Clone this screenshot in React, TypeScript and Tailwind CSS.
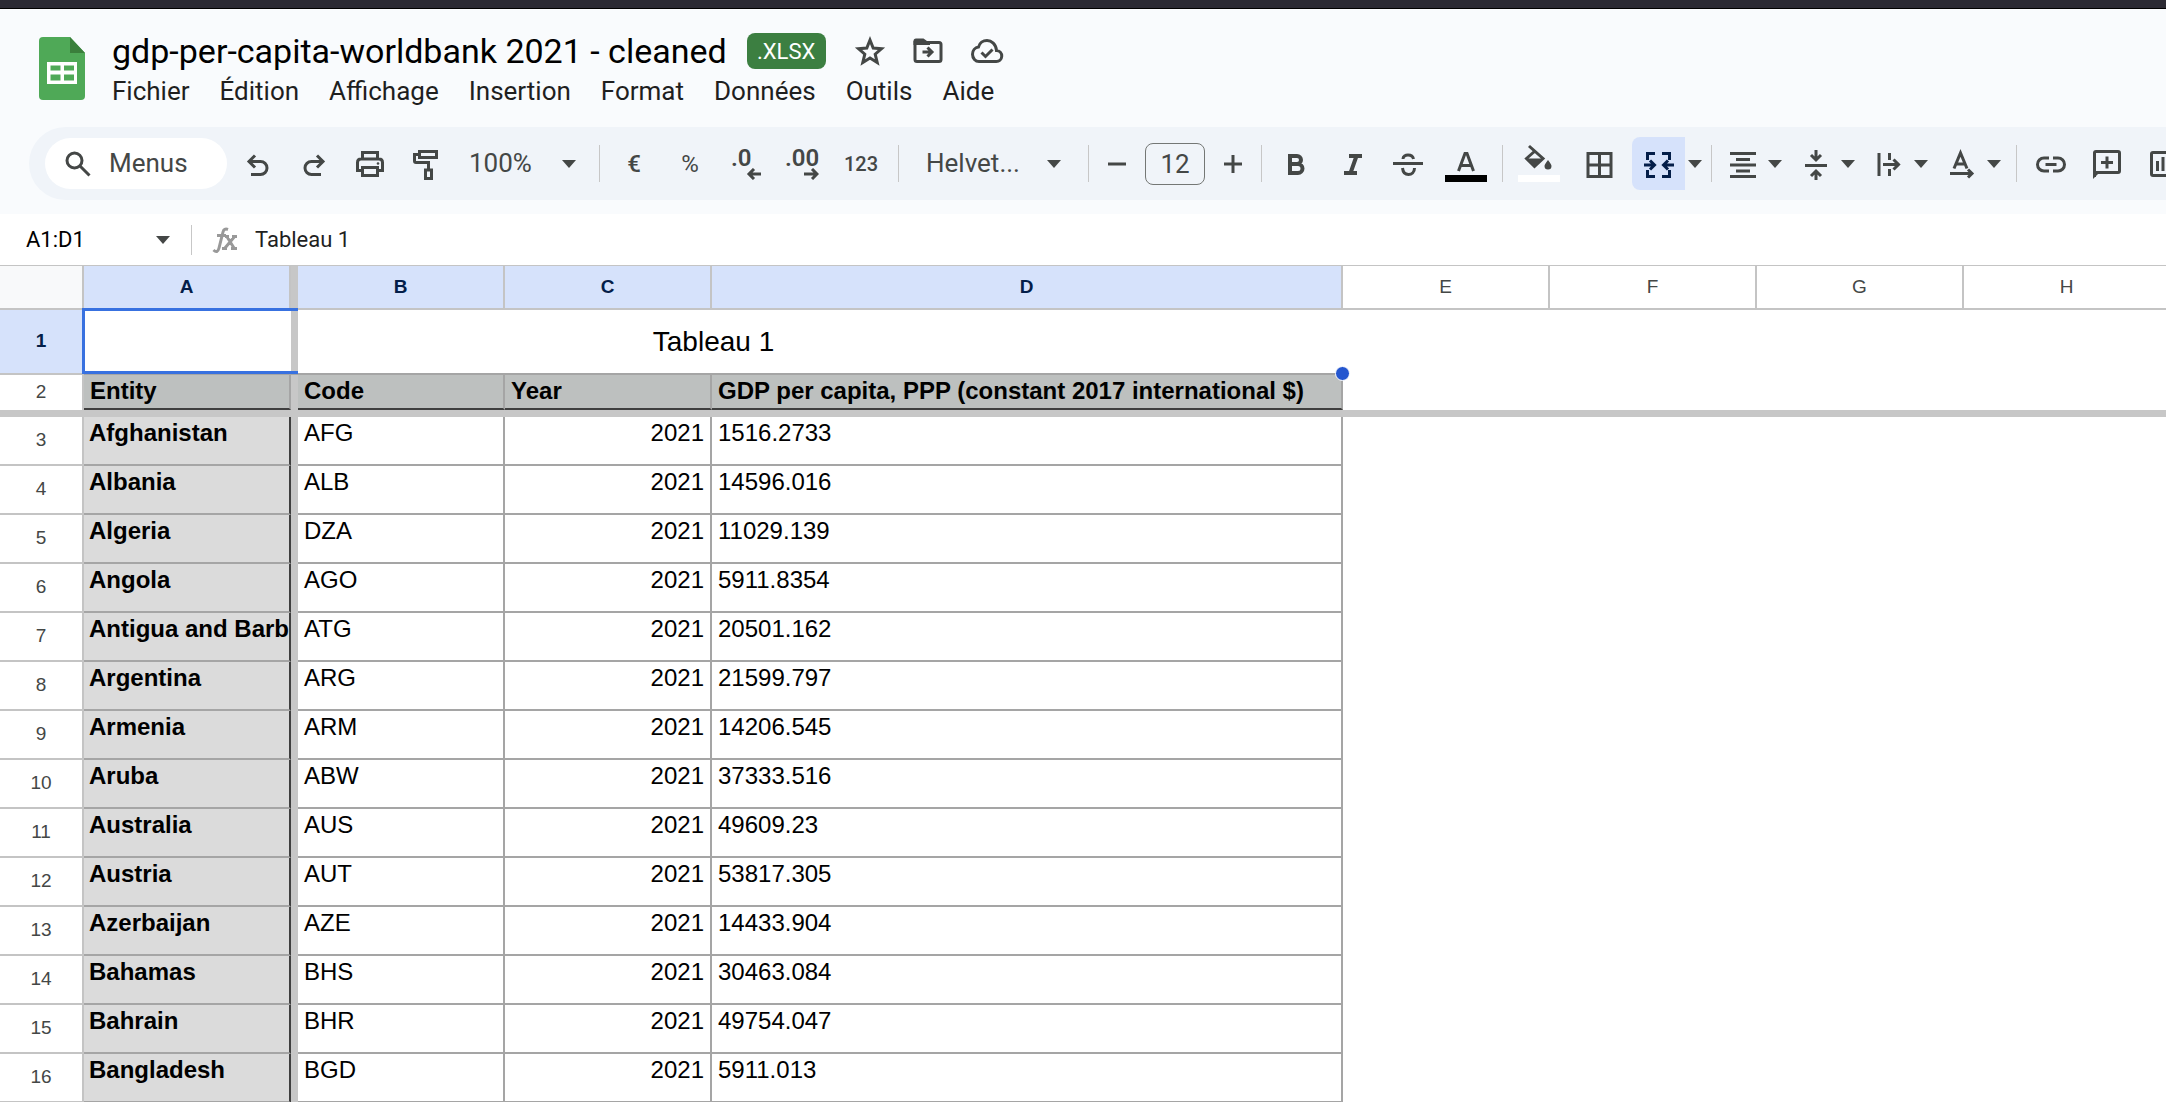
import type { ReactNode } from "react";

type Row = { entity: string; code: string; year: number; gdp: string };

const rows: Row[] = [
  { entity: "Afghanistan", code: "AFG", year: 2021, gdp: "1516.2733" },
  { entity: "Albania", code: "ALB", year: 2021, gdp: "14596.016" },
  { entity: "Algeria", code: "DZA", year: 2021, gdp: "11029.139" },
  { entity: "Angola", code: "AGO", year: 2021, gdp: "5911.8354" },
  { entity: "Antigua and Barb", code: "ATG", year: 2021, gdp: "20501.162" },
  { entity: "Argentina", code: "ARG", year: 2021, gdp: "21599.797" },
  { entity: "Armenia", code: "ARM", year: 2021, gdp: "14206.545" },
  { entity: "Aruba", code: "ABW", year: 2021, gdp: "37333.516" },
  { entity: "Australia", code: "AUS", year: 2021, gdp: "49609.23" },
  { entity: "Austria", code: "AUT", year: 2021, gdp: "53817.305" },
  { entity: "Azerbaijan", code: "AZE", year: 2021, gdp: "14433.904" },
  { entity: "Bahamas", code: "BHS", year: 2021, gdp: "30463.084" },
  { entity: "Bahrain", code: "BHR", year: 2021, gdp: "49754.047" },
  { entity: "Bangladesh", code: "BGD", year: 2021, gdp: "5911.013" },
];

const menus = ["Fichier", "Édition", "Affichage", "Insertion", "Format", "Données", "Outils", "Aide"];

type IconProps = { w?: number; h?: number; sw?: number; children: ReactNode };

const Icon = ({ w = 32, h = 32, sw = 3, children }: IconProps) => (
  <svg
    width={w}
    height={h}
    viewBox={`0 0 ${w} ${h}`}
    fill="none"
    stroke="currentColor"
    strokeWidth={sw}
    className="shrink-0"
    aria-hidden="true"
  >
    {children}
  </svg>
);

const Caret = () => (
  <svg width="14" height="8" viewBox="0 0 14 8" className="shrink-0" aria-hidden="true">
    <path d="M0 0h14L7 8z" fill="#444746" />
  </svg>
);

const Divider = () => <div className="mx-[6px] h-[37px] w-px shrink-0 bg-[#c7c7c7]" />;

type ToolProps = { label: string; className?: string; children: ReactNode };

const Tool = ({ label, className = "w-14", children }: ToolProps) => (
  <button aria-label={label} className={`flex h-[53px] shrink-0 items-center justify-center ${className}`}>
    {children}
  </button>
);

const DropTool = ({ label, children }: ToolProps) => (
  <div className="flex shrink-0 items-center pr-[9px]">
    <Tool label={label} className="w-[50px]">
      {children}
    </Tool>
    <button aria-label={`${label} : options`}>
      <Caret />
    </button>
  </div>
);

const SheetsLogo = () => (
  <svg width="46" height="63" viewBox="0 0 46 63" className="mt-7 shrink-0" aria-hidden="true">
    <path d="M4 0h27l15 16v43a4 4 0 0 1-4 4H4a4 4 0 0 1-4-4V4a4 4 0 0 1 4-4z" fill="#4fa957" />
    <path d="M31 0l15 16H31z" fill="#3a7f3b" />
    <path
      d="M8 25h30v22H8zM11.500 28.500v5h10v-5zM25 28.500v5h10v-5zM11.500 37.500v6h10v-6zM25 37.500v6h10v-6z"
      fill="#fff"
      fillRule="evenodd"
    />
  </svg>
);

const Header = () => (
  <header className="flex pl-[39px]">
    <SheetsLogo />
    <div className="pt-[22px] pl-[27px]">
      <div className="flex items-center">
        <h1 className="text-[34px] leading-10 whitespace-nowrap text-black">gdp-per-capita-worldbank 2021 - cleaned</h1>
        <span className="ml-5 flex h-9 w-[79px] items-center justify-center rounded-lg bg-[#3c7f41] text-[22px] text-white">
          .XLSX
        </span>
        <div className="ml-7 flex items-center gap-[26px] text-[#444746]">
          <button aria-label="Activer le suivi">
            <Icon sw={3}>
              <path d="M16 5l3.200 8 8.300.700-6.300 5.500 2 8.300L16 23l-7.200 4.500 2-8.300-6.300-5.500 8.300-.700z" />
            </Icon>
          </button>
          <button aria-label="Déplacer">
            <Icon sw={3}>
              <path d="M3 6v18.500q0 2 2 2h22q2 0 2-2V9.500q0-2-2-2H16" />
              <path d="M1.500 10V6q0-2.500 2.500-2.500h7.500L15 6h3v4z" fill="currentColor" stroke="none" />
              <path d="M10.500 17h9M15.500 12.500l4.500 4.500-4.500 4.500" />
            </Icon>
          </button>
          <button aria-label="État du document">
            <Icon w={34} sw={3}>
              <path d="M9 26.500h17a5.500 5.500 0 0 0 .500-11C26 9 21.500 5.500 17 5.500c-4 0-7.500 2.500-8.500 6.500C5 12.500 2.500 15.500 2.500 19.300c0 4 3 7.200 6.500 7.200z" />
              <path d="M11.500 17.500l4 4 7-7" />
            </Icon>
          </button>
        </div>
      </div>
      <nav className="flex gap-[30px]">
        {menus.map((menu) => (
          <button key={menu} className="h-14 pb-4 text-[26px] text-[#1f1f1f]">
            {menu}
          </button>
        ))}
      </nav>
    </div>
  </header>
);

const Toolbar = () => (
  <div
    role="toolbar"
    className="ml-[29px] flex h-[73px] items-center overflow-hidden rounded-l-full bg-[#f0f4f9] pl-4 text-[#444746]"
  >
    <label className="mr-[3px] flex h-[51px] w-[182px] shrink-0 items-center rounded-full bg-white pl-5">
      <Icon w={26} h={26}>
        <circle cx="9.500" cy="9.500" r="7.500" />
        <path d="M15 15l9.500 9.500" />
      </Icon>
      <input
        aria-label="Menus"
        placeholder="Menus"
        className="ml-[18px] w-24 bg-transparent text-[26px] outline-none placeholder:text-[#444746]"
      />
    </label>
    <Tool label="Annuler">
      <Icon>
        <path d="M9 26.500h9.500a6.500 6.500 0 0 0 0-13H7M13 7.500l-6 6 6 6" />
      </Icon>
    </Tool>
    <Tool label="Rétablir">
      <Icon>
        <path d="M23 26.500h-9.500a6.500 6.500 0 0 1 0-13H25M19 7.500l6 6-6 6" />
      </Icon>
    </Tool>
    <Tool label="Imprimer">
      <Icon>
        <path d="M8.500 10.500V4.500h15v6M8 22.500H3.500v-8q0-3.500 3.500-3.500h18q3.500 0 3.500 3.500v8H24M8.500 19.500h15v8h-15z" />
        <circle cx="24" cy="15.500" r="1.300" fill="currentColor" stroke="none" />
      </Icon>
    </Tool>
    <Tool label="Appliquer la mise en forme">
      <Icon>
        <path d="M9.500 3.500h17v6h-17zM9 6.500H4.500v6.500q0 1.500 1.500 1.500h12.500v6M15.500 22h6v8.500h-6z" />
      </Icon>
    </Tool>
    <label className="flex w-[139px] shrink-0 items-center pl-[15px]">
      <select aria-label="Zoom" defaultValue="100%" className="w-[93px] appearance-none bg-transparent text-[26px]">
        <option>100%</option>
      </select>
      <Caret />
    </label>
    <Divider />
    <Tool label="Format monétaire">
      <span className="text-2xl font-medium">€</span>
    </Tool>
    <Tool label="Format pourcentage">
      <span className="text-2xl">%</span>
    </Tool>
    <Tool label="Réduire le nombre de décimales">
      <span className="flex w-[30px] flex-col items-start">
        <span className="text-2xl leading-5 font-semibold">.0</span>
        <span className="self-end">
          <Icon w={15} h={12}>
            <path d="M15 6H3M8 1L3 6l5 5" />
          </Icon>
        </span>
      </span>
    </Tool>
    <Tool label="Augmenter le nombre de décimales">
      <span className="flex flex-col items-end">
        <span className="text-2xl leading-5 font-semibold">.00</span>
        <Icon w={15} h={12}>
          <path d="M0 6h12M8 1l5 5-5 5" />
        </Icon>
      </span>
    </Tool>
    <Tool label="Autres formats" className="w-[62px]">
      <span className="text-xl font-medium">123</span>
    </Tool>
    <Divider />
    <label className="flex w-[177px] shrink-0 items-center pl-[21px]">
      <select
        aria-label="Police"
        defaultValue="Helvet..."
        className="w-[121px] appearance-none bg-transparent text-[26px]"
      >
        <option>Helvet...</option>
      </select>
      <Caret />
    </label>
    <Divider />
    <Tool label="Réduire la taille de police" className="w-11">
      <Icon w={20} h={20}>
        <path d="M1 10h18" />
      </Icon>
    </Tool>
    <input
      aria-label="Taille de police"
      defaultValue="12"
      className="mx-[6px] h-[42px] w-[60px] shrink-0 rounded-lg border border-[#747775] text-center text-[26px] outline-none"
    />
    <Tool label="Augmenter la taille de police" className="w-11">
      <Icon w={20} h={20}>
        <path d="M1 10h18M10 1v18" />
      </Icon>
    </Tool>
    <Divider />
    <Tool label="Gras">
      <Icon sw={4}>
        <path d="M10 8h7a4 4 0 0 1 0 8h-7zM10 16h8a4.500 4.500 0 0 1 0 9h-8z" />
      </Icon>
    </Tool>
    <Tool label="Italique">
      <Icon sw={4}>
        <path d="M13 8h13M8 25h13M20.500 8l-6 17" />
      </Icon>
    </Tool>
    <Tool label="Barré">
      <Icon sw={3}>
        <path d="M1 15.500h30M11 11c0-2.500 2.500-4 5-4s5 1.500 5.500 4M10.500 20c.500 4.500 3 6.500 6 6.500s6-2 6-6.500" />
      </Icon>
    </Tool>
    <Tool label="Couleur du texte" className="w-[60px]">
      <Icon w={42} h={40}>
        <path d="M13.500 27L20 9.500h2L28.500 27M16 21.500h10" />
        <path d="M0 34.500h42" stroke="#000" strokeWidth="7" />
      </Icon>
    </Tool>
    <Divider />
    <Tool label="Couleur de remplissage" className="w-[60px]">
      <Icon w={42} h={48}>
        <path d="M11 6l14 12.500-8.500 8L8.500 18.500l9-8" />
        <path
          d="M8.500 18.500h16.500l-8.500 8.500zM30 20q3.500 4.500 3.500 6a3.500 3.500 0 0 1-7 0q0-1.500 3.500-6z"
          fill="currentColor"
          stroke="none"
        />
        <path d="M0 38.500h42" stroke="#fff" strokeWidth="7" />
      </Icon>
    </Tool>
    <Tool label="Bordures" className="w-[60px]">
      <Icon>
        <path d="M5 5.500h23v23H5zM16.500 5v24M5 17h23" />
      </Icon>
    </Tool>
    <Tool label="Fusionner les cellules" className="ml-[3px] w-[53px] rounded-l-lg bg-[#d6e2fb] text-[#041e49]">
      <Icon>
        <path d="M12 5.500H4.500V12M12 28.500H4.500V22M19 5.500h7.500V12M19 28.500h7.500V22M1 17h10M7 12.500l4.500 4.500L7 21.500M31 17H21M25 12.500L20.500 17l4.500 4.500" />
      </Icon>
    </Tool>
    <button aria-label="Type de fusion" className="flex w-5 shrink-0 justify-center">
      <Caret />
    </button>
    <Divider />
    <DropTool label="Alignement horizontal">
      <Icon>
        <path d="M3 5.500h26M9 11.500h14M3 17h26M9 23h14M3 28.500h26" />
      </Icon>
    </DropTool>
    <DropTool label="Alignement vertical">
      <Icon>
        <path d="M5 17.500h22M16 2v9M11 7l5 5 5-5M16 33v-9M11 28l5-5 5 5" />
      </Icon>
    </DropTool>
    <DropTool label="Retour à la ligne">
      <Icon>
        <path d="M6 5v23M16.500 5v7M16.500 21v7M10 16.500h15M20.500 11.500l5 5-5 5" />
      </Icon>
    </DropTool>
    <DropTool label="Rotation du texte">
      <Icon>
        <path d="M8 20.500L14.500 5 21 20.500M10 16h9M4 25.500h21M22 21.500l4 4-4 4" />
      </Icon>
    </DropTool>
    <Divider />
    <Tool label="Insérer un lien">
      <Icon>
        <path d="M14 10h-5a6.500 6.500 0 0 0 0 13h5M18 10h5a6.500 6.500 0 0 1 0 13h-5M10.500 16.500h11" />
      </Icon>
    </Tool>
    <Tool label="Insérer un commentaire">
      <Icon>
        <path d="M3.500 29V5q0-1.500 1.500-1.500h22q1.500 0 1.500 1.500v18q0 1.500-1.500 1.500H6M16 8.500v12M10 14.500h12" />
        <path d="M2 31v-8h8z" fill="currentColor" stroke="none" />
      </Icon>
    </Tool>
    <Tool label="Insérer un graphique">
      <Icon>
        <path d="M6 4.500h20q1.500 0 1.500 1.500v20q0 1.500-1.500 1.500H6q-1.500 0-1.500-1.500V6q0-1.500 1.500-1.500zM10.500 13v10M16 9v14M21.500 17v6" />
      </Icon>
    </Tool>
  </div>
);

const FormulaBar = () => (
  <div className="flex h-[51px] items-center bg-white">
    <label className="flex w-[191px] items-center pl-[26px]">
      <input
        aria-label="Zone de nom"
        defaultValue="A1:D1"
        className="w-[130px] bg-transparent text-[22px] text-black outline-none"
      />
      <Caret />
    </label>
    <div className="mr-5 h-[30px] w-px bg-[#c7c7c7]" />
    <Icon w={27} h={28} sw={3}>
      <path
        d="M1.500 24q4 4 5.500-2L11 6q1-4 5-2.500M5 9.500h9M13 10.500h4M20 10.500h5M10 22.500h5M19 22.500h6M14.500 10l7.500 12M23 10l-10 12"
        stroke="#999"
      />
    </Icon>
    <input
      aria-label="Barre de formule"
      defaultValue="Tableau 1"
      className="ml-4 grow bg-transparent text-[22px] text-[#1f1f1f] outline-none"
    />
  </div>
);

const colHead = "border-r-2 border-b-2 border-[#c4c4c4] text-[19px]";
const selectedHead = "bg-[#d6e2fb] font-bold text-[#041e49]";
const rowHead = "border-r-2 border-b-2 border-[#c4c4c4] pb-0.5 text-[19px] font-normal text-[#444746]";
const headCell =
  "border-r-2 border-b-2 border-r-[#a5a5a5] border-b-[#3f3f3f] bg-[#bdc0bf] px-[6px] pt-0.5 text-left align-top font-bold";
const cell = "border-r-2 border-b-2 border-[#a5a5a5] px-[6px] pt-0.5 align-top";

const Sheet = () => (
  <table className="w-full table-fixed border-separate border-spacing-0 border-t border-[#c4c4c4] bg-white font-['Liberation_Sans',Arial,sans-serif] text-2xl leading-7 whitespace-nowrap text-black">
    <colgroup>
      <col className="w-[84px]" />
      <col className="w-[207px]" />
      <col className="w-[7px]" />
      <col className="w-[207px]" />
      <col className="w-[207px]" />
      <col className="w-[631px]" />
      <col className="w-[207px]" />
      <col className="w-[207px]" />
      <col className="w-[207px]" />
      <col className="w-[207px]" />
    </colgroup>
    <thead>
      <tr className="h-11">
        <td className={`${colHead} bg-[#f8f9fa]`} />
        <th className={`${colHead} ${selectedHead}`}>A</th>
        <td className="bg-[#c7c7c7]" />
        <th className={`${colHead} ${selectedHead}`}>B</th>
        <th className={`${colHead} ${selectedHead}`}>C</th>
        <th className={`${colHead} ${selectedHead}`}>D</th>
        {["E", "F", "G", "H"].map((letter) => (
          <th key={letter} className={`${colHead} font-normal text-[#444746]`}>
            {letter}
          </th>
        ))}
      </tr>
    </thead>
    <tbody>
      <tr className="h-[65px]">
        <th className={`${rowHead} bg-[#d6e2fb] font-bold! text-[#041e49]!`}>1</th>
        <td colSpan={5} className="relative border-b-2 border-[#a5a5a5] text-center text-[28px]">
          Tableau 1
          <div className="absolute inset-y-0 left-[207px] w-[7px] bg-[#c7c7c7]" />
          <div className="absolute -top-0.5 -bottom-px -left-0.5 w-[216px] border-y-3 border-l-3 border-[#3871e0]" />
          <div className="absolute -right-[7px] -bottom-2 z-10 size-[15px] rounded-full border border-white bg-[#2456cf]" />
        </td>
        <td colSpan={4} />
      </tr>
      <tr className="h-[35px]">
        <th className="border-r-2 border-[#c4c4c4] pb-0.5 text-[19px] font-normal text-[#444746]">2</th>
        <th className={headCell}>Entity</th>
        <td className="bg-[#c7c7c7]" />
        <th className={headCell}>Code</th>
        <th className={headCell}>Year</th>
        <th className={headCell}>GDP per capita, PPP (constant 2017 international $)</th>
        <td colSpan={4} />
      </tr>
      <tr className="h-[7px]">
        <td colSpan={10} className="bg-[#c7c7c7]" />
      </tr>
      {rows.map((row, i) => (
        <tr key={row.code} className="h-[49px]">
          <th className={rowHead}>{i + 3}</th>
          <th className="overflow-hidden border-r-2 border-b-2 border-r-[#3f3f3f] border-b-[#a5a5a5] bg-[#dbdbdb] pt-0.5 pl-[5px] text-left align-top font-bold">
            {row.entity}
          </th>
          <td className="bg-[#c7c7c7]" />
          <td className={cell}>{row.code}</td>
          <td className={`${cell} text-right`}>{row.year}</td>
          <td className={cell}>{row.gdp}</td>
          <td colSpan={4} />
        </tr>
      ))}
    </tbody>
  </table>
);

export default function App() {
  return (
    <div className="h-screen overflow-hidden bg-[#f9fbfd] font-[Roboto,sans-serif]">
      <div className="h-[9px] border-b border-black bg-[#2b2a33]" />
      <Header />
      <Toolbar />
      <div className="h-[14px]" />
      <FormulaBar />
      <Sheet />
    </div>
  );
}
